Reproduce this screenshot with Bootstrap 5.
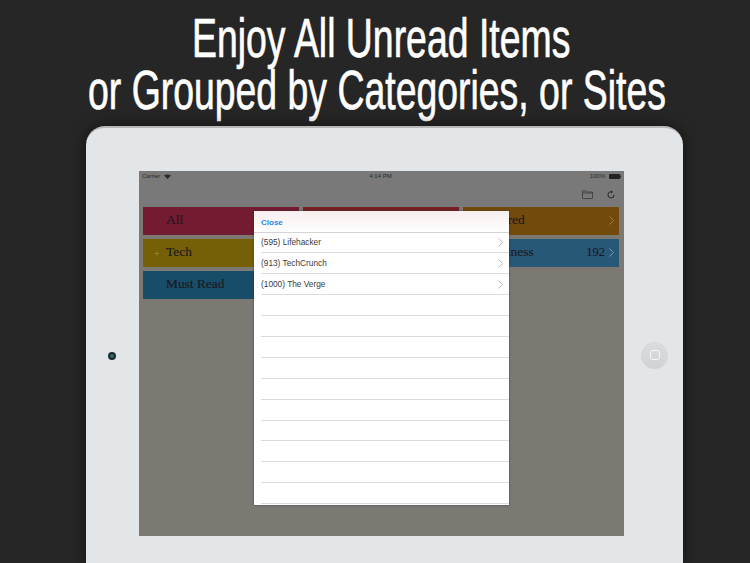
<!DOCTYPE html>
<html lang="en"><head><meta charset="utf-8">
<link href="https://cdn.jsdelivr.net/npm/bootstrap@5.3.0/dist/css/bootstrap.min.css" rel="stylesheet">
<style>
html,body{height:563px;overflow:hidden}
body{background:#262626;margin:0}
.promo-title{height:126px;padding-top:12px;color:#fff;font-family:"Liberation Sans",sans-serif;font-size:55px;line-height:52px;font-weight:400;-webkit-text-stroke:.7px #fff}
.promo-title span{white-space:nowrap;transform:scaleX(.68);transform-origin:center}
.line-a{margin-left:13px}
.line-b{margin-left:4px}
.device{width:597px;height:437px;margin-left:86px;background:#e3e6e9;border-radius:19px 19px 0 0;border-top:2px solid #b5b7b9;box-shadow:0 0 14px rgba(0,0,0,.55);padding:43px 59px 0 53px;position:relative}
.cam{position:absolute;left:22px;top:224px;width:8px;height:8px;border-radius:50%;background:#2f6a6a;border:2px solid #1c2a2c}
.home{position:absolute;left:555px;top:214px;width:27px;height:27px;border-radius:50%;background:linear-gradient(#dadcde,#d0d2d4)}
.home::after{content:"";position:absolute;left:9px;top:8px;width:10px;height:10px;border:1.5px solid #f6f7f8;border-radius:3px}
.screen{width:485px;height:365px;background:#7b7972;position:relative;font-family:"Liberation Sans",sans-serif;overflow:hidden}
.topbar{height:36px;background:#797979;padding:0 3px 0 3px}
.status{height:11px;font-size:6px;line-height:11px;color:#2a2a2a}
.tools{height:25px;padding-right:6px}
.tiles{display:grid;grid-template-columns:156px 156px 156px;grid-auto-rows:28px;gap:4px;padding:0 5px 0 4px}
.tile{font-family:"Liberation Serif",serif;font-size:13.4px;color:#1d1820;padding:0 0 2px 23px;-webkit-text-stroke:.15px #1d1820;position:relative}
.t-red{background:#731b31}.t-red2{background:#772023}.t-orange{background:#724a0c}.t-gold{background:#756007}.t-blue{background:#184d6a}.t-blue2{background:#275878}
.plus{position:absolute;left:11px;top:0;bottom:0;color:#a8913a;font-size:10px;-webkit-text-stroke:0}
.count{font-size:12.5px}
.chev{width:5px;height:9px;flex:none}
.sheet{position:absolute;left:115px;top:40px;width:255px;height:294px;background:#fff;overflow:hidden;box-shadow:0 0 2px rgba(40,40,40,.6)}
.sheet-head{height:21.5px;padding:3px 0 0 7px;font-size:8px;font-weight:700;color:#2a86e6;background:linear-gradient(#f6eeee,#fff);border-bottom:1px solid #d4d4d4}
.sheet-row{height:20.9px;margin-left:7px;padding:0 6px 0 0;border-bottom:1px solid #dcdcdc;font-size:8.3px;color:#3a3a3a;background:transparent}
</style></head><body>
<div class="promo-title d-flex flex-column align-items-center"><span class="line-a">Enjoy All Unread Items</span><span class="line-b">or Grouped by Categories, or Sites</span></div>
<div class="device">
<div class="cam"></div><div class="home"></div>
<div class="screen">
<div class="topbar">
<div class="status d-flex justify-content-between align-items-center"><span class="d-flex align-items-center gap-1">Carrier <svg width="7" height="5" viewBox="0 0 7 5"><path d="M0 1.6C2 0 5 0 7 1.6L3.5 5Z" fill="#2a2a2a"/></svg></span><span>4:14 PM</span><span class="d-flex align-items-center gap-1">100% <svg width="12" height="5" viewBox="0 0 12 5"><rect width="11" height="5" rx="1" fill="#222"/><rect x="11" y="1.5" width="1" height="2" fill="#222"/></svg></span></div>
<div class="tools d-flex justify-content-end align-items-center" style="gap:14px">
<svg width="11" height="9" viewBox="0 0 11 9" fill="none" stroke="#333" stroke-width=".7"><path d="M.5 8.5V.8h3.4l.8 1.2h5.8v6.5zM.5 3h10"/></svg>
<svg width="8" height="9" viewBox="0 0 9 10" fill="none" stroke="#222" stroke-width="1.1"><path d="M5.4 2.2A3.4 3.4 0 1 0 7.9 5.4"/><path d="M4.6.4 6.8 2.2 4.6 4" fill="#222" stroke="none"/></svg>
</div></div>
<div class="tiles">
<div class="tile t-red d-flex align-items-center">All</div>
<div class="tile t-red2"></div>
<div class="tile t-orange d-flex align-items-center justify-content-between">Starred<svg class="chev" style="margin-right:5px" viewBox="0 0 5 9" fill="none" stroke="#a08045"><path d="M.5.5 4.5 4.5.5 8.5"/></svg></div>
<div class="tile t-gold d-flex align-items-center"><span class="plus d-flex align-items-center">+</span>Tech</div>
<div class="tile t-gold"></div>
<div class="tile t-blue2 d-flex align-items-center justify-content-between">Business<span class="d-flex align-items-center"><span class="count">192</span><svg class="chev" style="margin:0 5px 0 4px" viewBox="0 0 5 9" fill="none" stroke="#7097b0"><path d="M.5.5 4.5 4.5.5 8.5"/></svg></span></div>
<div class="tile t-blue d-flex align-items-center">Must Read</div>
</div>
<div class="sheet">
<div class="sheet-head d-flex align-items-center">Close</div>
<div class="list-group list-group-flush">
<div class="sheet-row d-flex align-items-center justify-content-between">(595) Lifehacker<svg class="chev" viewBox="0 0 5 9" fill="none" stroke="#b8b8b8"><path d="M.5.5 4.5 4.5.5 8.5"/></svg></div>
<div class="sheet-row d-flex align-items-center justify-content-between">(913) TechCrunch<svg class="chev" viewBox="0 0 5 9" fill="none" stroke="#b8b8b8"><path d="M.5.5 4.5 4.5.5 8.5"/></svg></div>
<div class="sheet-row d-flex align-items-center justify-content-between">(1000) The Verge<svg class="chev" viewBox="0 0 5 9" fill="none" stroke="#b8b8b8"><path d="M.5.5 4.5 4.5.5 8.5"/></svg></div>
<div class="sheet-row"></div><div class="sheet-row"></div><div class="sheet-row"></div><div class="sheet-row"></div><div class="sheet-row"></div><div class="sheet-row"></div><div class="sheet-row"></div><div class="sheet-row"></div><div class="sheet-row"></div><div class="sheet-row"></div>
</div></div>
</div></div>
<script src="https://cdn.jsdelivr.net/npm/bootstrap@5.3.0/dist/js/bootstrap.bundle.min.js"></script>
</body></html>
